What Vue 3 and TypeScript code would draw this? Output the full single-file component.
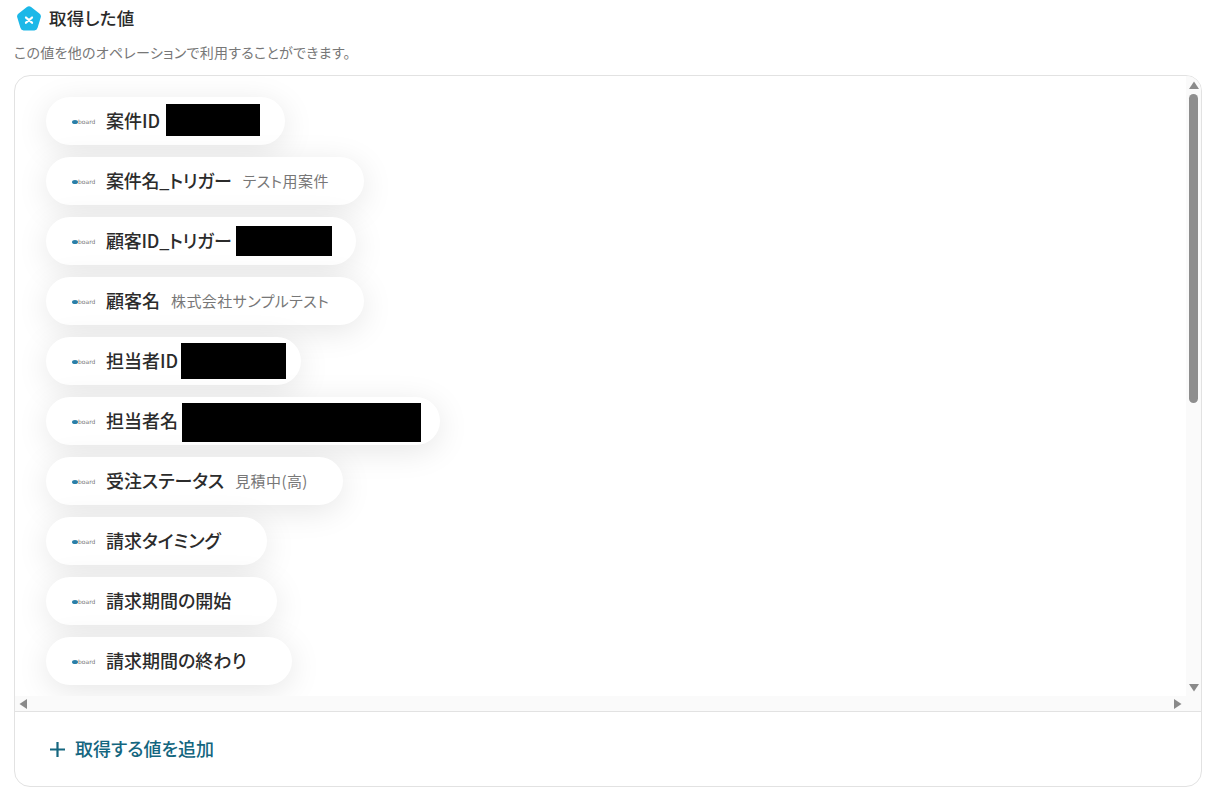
<template>
  <div class="page">
    <header class="head">
      <svg class="badge" width="26" height="26" viewBox="0 0 26 26">
        <g transform="translate(0 -0.500) scale(1 1.060)">
          <path d="M10.900 1.500a3.400 3.400 0 0 1 4.200 0l8.300 6a3.400 3.400 0 0 1 1.300 3.900l-3.100 9.700a3.400 3.400 0 0 1-3.300 2.400H7.700a3.400 3.400 0 0 1-3.300-2.400L1.300 11.400a3.400 3.400 0 0 1 1.300-3.900z" fill="#1cb8e8" />
          <path d="M10 11.400l6 4.800M16 11.400l-6 4.800" stroke="#fff" stroke-width="2.200" stroke-linecap="round" />
        </g>
      </svg>
      <h2 class="title">取得した値</h2>
    </header>
    <p class="hint">この値を他のオペレーションで利用することができます。</p>

    <section class="card">
      <div class="viewport">
        <div class="list">
          <div v-for="row in rows" :key="row.label" class="pill">
            <span class="logo"><i class="logo-dot"></i><span class="logo-text">board</span></span>
            <span class="label" :class="{ tight: row.label.includes('_') }">{{ row.label }}</span>
            <span v-if="row.mask" class="mask" :style="maskStyle(row.mask)"></span>
            <span v-else class="value">{{ row.value }}</span>
          </div>
        </div>
        <div class="bar-v">
          <svg class="arrow" width="10" height="8" viewBox="0 0 10 8"><path d="M5 .5 10 8H0z" fill="#8a8a8a" /></svg>
          <div class="thumb-v"></div>
          <svg class="arrow arrow-end" width="10" height="8" viewBox="0 0 10 8"><path d="M5 7.500 10 0H0z" fill="#8a8a8a" /></svg>
        </div>
        <div class="bar-h">
          <svg width="8" height="10" viewBox="0 0 8 10"><path d="M.5 5 8 0v10z" fill="#8a8a8a" /></svg>
          <svg width="8" height="10" viewBox="0 0 8 10"><path d="M7.500 5 0 0v10z" fill="#8a8a8a" /></svg>
        </div>
      </div>
      <footer class="foot">
        <svg width="17" height="17" viewBox="0 0 17 17"><path d="M8.500 1v15M1 8.500h15" stroke="#14667f" stroke-width="2.200" /></svg>
        <span class="add">取得する値を追加</span>
      </footer>
    </section>
  </div>
</template>

<script setup lang="ts">
interface Mask {
  left: number
  width: number
  height: number
  right: number
  shift: number
}

interface Row {
  label: string
  value?: string
  mask?: Mask
}

const rows: Row[] = [
  { label: '案件ID', mask: { left: 6, width: 94, height: 32, right: 25, shift: -3 } },
  { label: '案件名_トリガー', value: 'テスト用案件' },
  { label: '顧客ID_トリガー', mask: { left: 4, width: 96, height: 30, right: 24, shift: 0 } },
  { label: '顧客名', value: '株式会社サンプルテスト' },
  { label: '担当者ID', mask: { left: 3, width: 105, height: 36, right: 15, shift: 0 } },
  { label: '担当者名', mask: { left: 4, width: 239, height: 39, right: 19, shift: 3 } },
  { label: '受注ステータス', value: '見積中(高)' },
  { label: '請求タイミング' },
  { label: '請求期間の開始' },
  { label: '請求期間の終わり' },
]

function maskStyle(m: Mask) {
  return {
    width: `${m.width}px`,
    height: `${m.height}px`,
    marginLeft: `${m.left}px`,
    marginRight: `${m.right - 35}px`,
    marginTop: `${m.shift}px`,
  }
}
</script>

<style>
html,
body {
  margin: 0;
  background: #fff;
}
</style>

<style scoped>
.page {
  width: 1218px;
  height: 790px;
  box-sizing: border-box;
  padding: 6px 16px 0 14px;
  overflow: hidden;
  font-family: "Noto Sans CJK JP", "Noto Sans", sans-serif;
  font-feature-settings: "palt";
  color: #2b2b2b;
}

.head {
  display: flex;
  align-items: center;
  gap: 7px;
  height: 26px;
  padding-left: 2px;
}

.badge {
  flex: none;
}

.title {
  margin: 0;
  font-size: 17.500px;
  font-weight: 500;
  letter-spacing: 0.3px;
  line-height: 24px;
  padding-bottom: 2px;
}

.hint {
  margin: 10px 0 0;
  font-size: 14px;
  letter-spacing: 0.28px;
  line-height: 20px;
  color: #777;
}

.card {
  margin-top: 13px;
  height: 712px;
  box-sizing: border-box;
  border: 1px solid #e2e2e2;
  border-radius: 16px;
  overflow: hidden;
  display: flex;
  flex-direction: column;
}

.viewport {
  height: 635px;
  flex: none;
  display: grid;
  grid-template-columns: 1fr 15px;
  grid-template-rows: 620px 15px;
  border-bottom: 1px solid #e2e2e2;
}

.list {
  overflow: hidden;
  padding: 21px 0 0 31px;
  display: flex;
  flex-direction: column;
  align-items: flex-start;
  gap: 12px;
}

.pill {
  flex: none;
  display: inline-flex;
  align-items: center;
  height: 48px;
  padding: 0 35px 0 26px;
  border-radius: 24px;
  background: #fff;
  box-shadow: 0 6px 32px rgba(0, 0, 0, 0.1);
}

.logo {
  width: 24px;
  display: inline-flex;
  align-items: center;
  margin-top: 1px;
  margin-right: 10px;
}

.logo-dot {
  flex: none;
  width: 6px;
  height: 4px;
  border-radius: 50%;
  background: #2a7fa8;
}

.logo-text {
  font-family: "DejaVu Sans", sans-serif;
  font-size: 6px;
  line-height: 10px;
  color: #777;
}

.label {
  font-size: 18px;
  font-weight: 500;
  line-height: 24px;
  padding-bottom: 2px;
  white-space: nowrap;
}

.tight {
  letter-spacing: -0.25px;
}

.value {
  margin-left: 11px;
  font-size: 15px;
  letter-spacing: 0.42px;
  line-height: 22px;
  color: #777;
  white-space: nowrap;
}

.mask {
  flex: none;
  background: #000;
}

.bar-v {
  grid-row: 1;
  grid-column: 2;
  display: flex;
  flex-direction: column;
  align-items: center;
  padding: 5px 0 4px;
  background: #fafafa;
}

.thumb-v {
  width: 9px;
  height: 309px;
  margin-top: 5px;
  border-radius: 5px;
  background: #8e8e8e;
}

.arrow {
  flex: none;
}

.arrow-end {
  margin-top: auto;
}

.bar-h {
  grid-row: 2;
  grid-column: 1 / span 2;
  display: flex;
  align-items: center;
  justify-content: space-between;
  padding: 0 19px 0 4px;
  background: #fafafa;
}

.foot {
  flex: 1;
  display: flex;
  align-items: center;
  gap: 9px;
  padding-left: 34px;
}

.add {
  font-size: 18px;
  font-weight: 500;
  line-height: 24px;
  padding-bottom: 2px;
  color: #14667f;
}
</style>
